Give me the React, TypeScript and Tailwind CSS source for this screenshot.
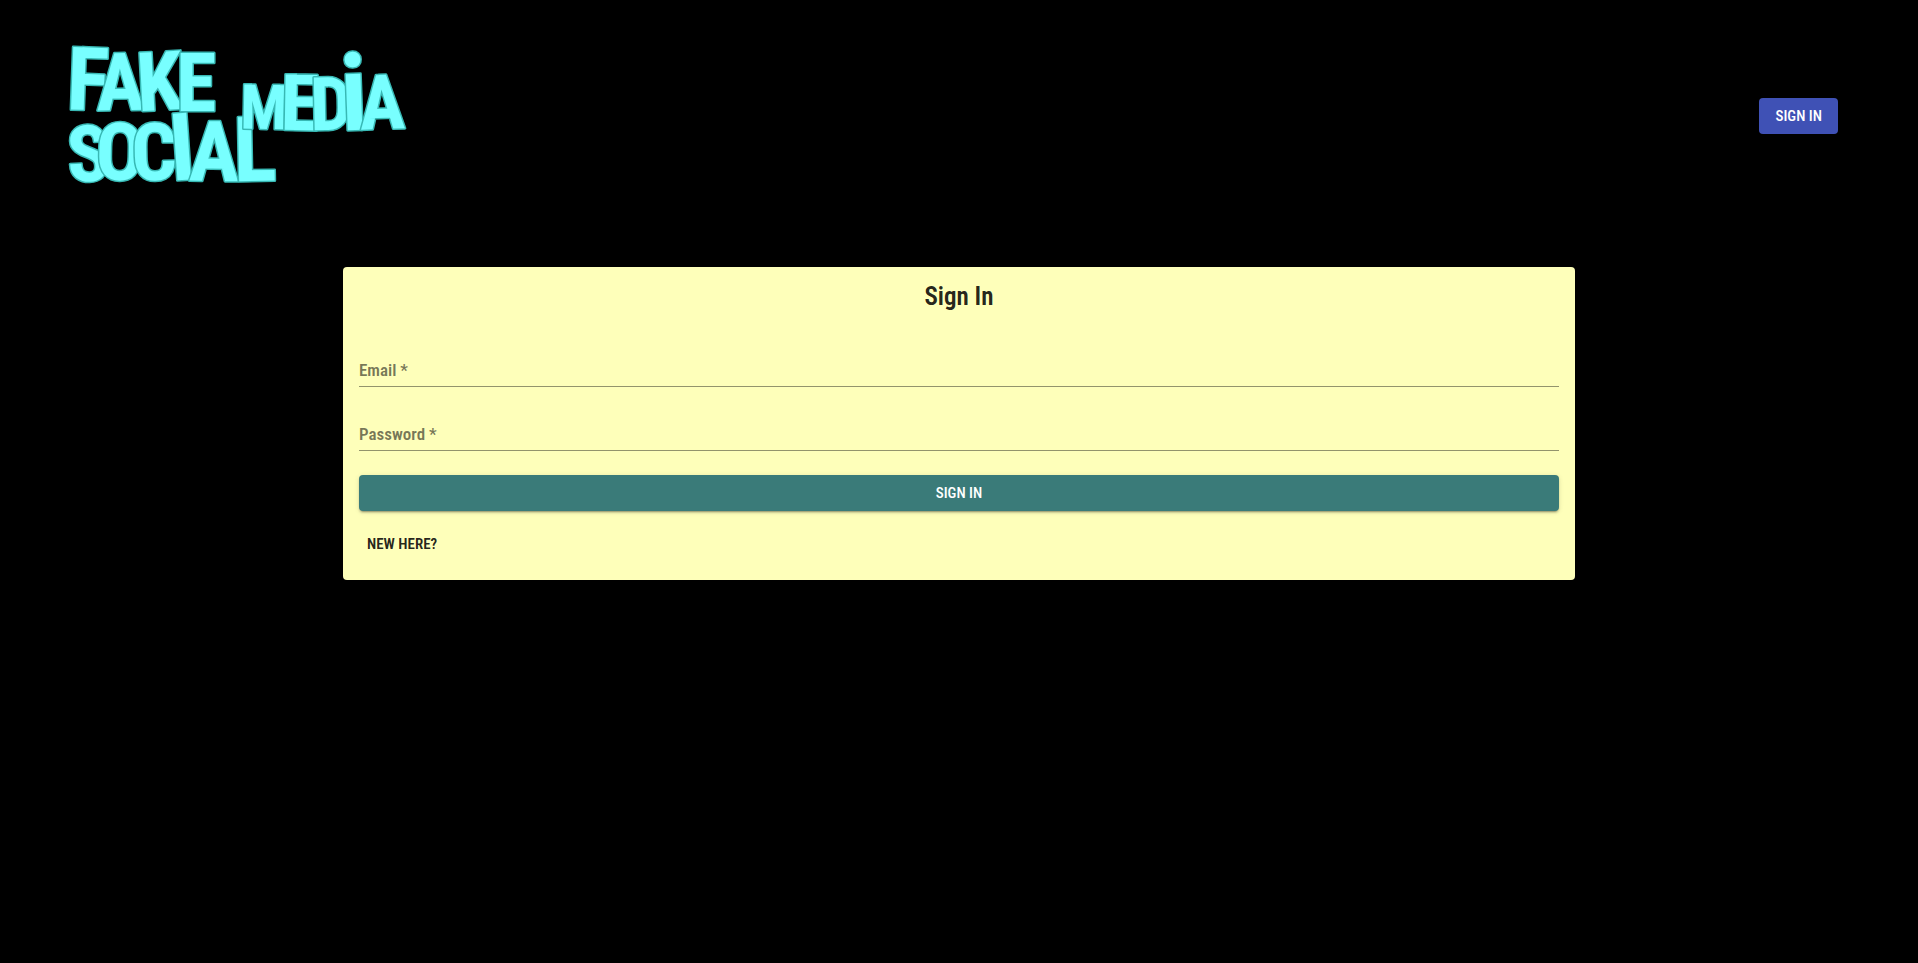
import { useState } from "react";

type Glyph = { char: string; x: number; y: number; size: number; tilt: number };

const LETTERS: Glyph[] = [
  { char: "F", x: 20, y: 66, size: 88, tilt: 2 },
  { char: "A", x: 52, y: 66, size: 80, tilt: -1 },
  { char: "K", x: 91, y: 66, size: 82, tilt: -3 },
  { char: "E", x: 128, y: 67, size: 82, tilt: 0 },
  { char: "S", x: 20, y: 137, size: 78, tilt: -2 },
  { char: "O", x: 52, y: 136, size: 80, tilt: 1 },
  { char: "C", x: 86, y: 136, size: 80, tilt: -1 },
  { char: "I", x: 114, y: 136, size: 94, tilt: -4 },
  { char: "A", x: 146, y: 137, size: 84, tilt: 1 },
  { char: "L", x: 187, y: 137, size: 90, tilt: -1 },
  { char: "M", x: 196, y: 85, size: 62, tilt: 1 },
  { char: "E", x: 232, y: 86, size: 78, tilt: 1 },
  { char: "D", x: 263, y: 86, size: 74, tilt: -1 },
  { char: "i", x: 286, y: 86, size: 106, tilt: -2 },
  { char: "A", x: 314, y: 85, size: 76, tilt: -2 },
];

function Logo() {
  return (
    <svg
      width="336"
      height="144"
      viewBox="0 0 336 144"
      role="img"
      aria-label="Fake Social Media"
      className="shrink-0 overflow-visible fill-[#78ffff] stroke-[#38b8b4] stroke-3 font-['Roboto_Condensed','Open_Sans_Condensed',sans-serif] font-bold [paint-order:stroke]"
    >
      {LETTERS.map((g, i) => (
        <text
          key={i}
          x={g.x}
          y={g.y}
          fontSize={g.size}
          textAnchor="middle"
          strokeLinejoin="round"
          transform={`rotate(${g.tilt} ${g.x} ${g.y - 30})`}
        >
          {g.char}
        </text>
      ))}
    </svg>
  );
}

type FieldProps = { id: string; label: string; type: string; value: string; onChange: (v: string) => void };

function Field({ id, label, type, value, onChange }: FieldProps) {
  return (
    <div className="grid h-12 items-end border-b border-[#93946c]">
      <label
        htmlFor={id}
        className="col-start-1 row-start-1 pb-1 text-[17px] leading-6 font-semibold text-black/54"
      >
        {value ? "" : `${label} *`}
      </label>
      <input
        id={id}
        type={type}
        required
        aria-label={label}
        value={value}
        onChange={(e) => onChange(e.target.value)}
        className="col-start-1 row-start-1 h-8 w-full bg-transparent text-[17px] text-black/87 outline-none"
      />
    </div>
  );
}

export default function App() {
  const [email, setEmail] = useState("");
  const [password, setPassword] = useState("");

  return (
    <div className="min-h-screen bg-black font-['Roboto_Condensed','Noto_Sans_Condensed',sans-serif]">
      <header className="flex items-center justify-between px-[68px] pt-11 pb-[79px]">
        <a href="#home" className="block">
          <Logo />
        </a>
        <a
          href="#signin"
          className="mr-3 flex h-9 items-center rounded bg-[#3f51b5] px-4 text-[15px] leading-6 font-medium text-white"
        >
          SIGN IN
        </a>
      </header>
      <main className="mx-auto max-w-[1280px] px-6">
        <form
          onSubmit={(e) => e.preventDefault()}
          className="flex flex-col rounded bg-[#feffba] p-4 pb-[18px]"
        >
          <h1 className="text-center text-[25px] leading-7 font-semibold text-black/87">Sign In</h1>
          <div className="mt-7 flex flex-col gap-4">
            <Field id="email" label="Email" type="email" value={email} onChange={setEmail} />
            <Field id="password" label="Password" type="password" value={password} onChange={setPassword} />
          </div>
          <button
            type="submit"
            className="mt-6 h-9 rounded bg-[#3a7b79] text-[15px] leading-6 font-medium text-white shadow-[0_3px_1px_-2px_rgba(0,0,0,0.2),0_2px_2px_0_rgba(0,0,0,0.14),0_1px_5px_0_rgba(0,0,0,0.12)]"
          >
            SIGN IN
          </button>
          <button
            type="button"
            className="mt-[15px] h-9 self-start rounded px-2 text-[15px] leading-6 font-semibold text-black/87"
          >
            NEW HERE?
          </button>
        </form>
      </main>
    </div>
  );
}
